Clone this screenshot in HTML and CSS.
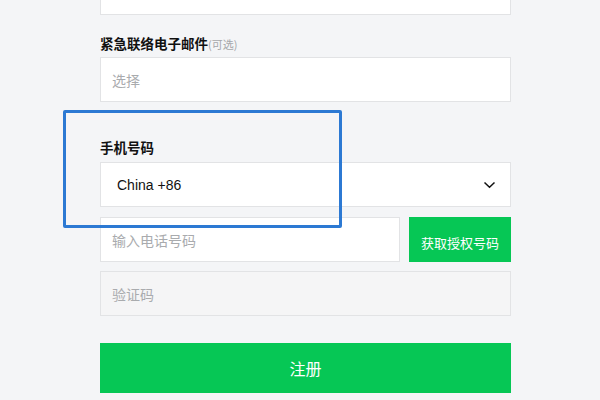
FILE: index.html
```html
<!DOCTYPE html>
<html>
<head>
    <meta charset="utf-8">
    <title>注册</title>
    <link rel="stylesheet" href="styles.css">
</head>
<body>
    <div id="page">
        <form id="signup">
            <div class="input stub"></div>

            <div class="label">紧急联络电子邮件<span class="optional">(可选)</span></div>
            <div class="input"><span class="placeholder">选择</span></div>

            <div class="label label-phone">手机号码</div>
            <div class="input select">
                <span class="value">China +86</span>
                <svg class="chevron" width="13" height="8" viewBox="0 0 13 8">
                    <path d="M1.5 1.5 L6.5 6.3 L11.5 1.5" fill="none" stroke="#111" stroke-width="1.5"/>
                </svg>
            </div>

            <div class="row">
                <div class="input phone"><span class="placeholder">输入电话号码</span></div>
                <button type="button" class="btn-code">获取授权号码</button>
            </div>

            <div class="input code"><span class="placeholder">验证码</span></div>

            <button type="button" class="btn-submit">注册</button>
        </form>

        <!-- marcação de destaque -->
        <div id="highlight"></div>
    </div>
</body>
</html>
```

FILE: styles.css
```css
body {
    margin: 0;
    padding: 0;
    background-color: #f4f5f7;
    font-family: "Noto Sans CJK SC", "Liberation Sans", sans-serif;
    overflow: hidden;
}

#page {
    position: relative;
    width: 600px;
    height: 400px;
}

#signup {
    display: flex;
    flex-direction: column;
    width: 411px;
    margin-left: 100px;
}

.input {
    box-sizing: border-box;
    height: 45px;
    background-color: #fff;
    border: 1px solid #e2e3e5;
    display: flex;
    align-items: center;
    padding: 0 11px;
    font-size: 14px;
}

.stub {
    margin-top: -30px;
}

.label {
    margin-top: 19px;
    margin-bottom: 5px;
    height: 18px;
    line-height: 18px;
    font-size: 13.5px;
    font-weight: bold;
    color: #111;
}

.label-phone {
    margin-top: 36px;
    margin-bottom: 6px;
}

.optional {
    font-size: 11px;
    font-weight: normal;
    color: #a5a7aa;
}

.placeholder {
    color: #a9abae;
}

.select {
    justify-content: space-between;
    padding: 0 14px 0 16px;
}

.select .value {
    font-family: "Liberation Sans", Arial, sans-serif;
    color: #111;
}

.row {
    display: flex;
    gap: 9px;
    margin-top: 10px;
}

.phone {
    flex: 1;
}

.btn-code {
    width: 102px;
    height: 45px;
    border: none;
    background-color: #06c755;
    color: #fff;
    font-family: inherit;
    font-size: 13px;
    padding: 5px 0 0;
}

.code {
    margin-top: 9px;
    background-color: #f5f5f6;
}

.btn-submit {
    margin-top: 27px;
    height: 50px;
    border: none;
    background-color: #06c755;
    color: #fff;
    font-family: inherit;
    font-size: 16px;
}

#highlight {
    position: absolute;
    left: 63px;
    top: 110px;
    width: 273px;
    height: 112px;
    border: 3px solid #2c79d3;
    border-radius: 2px;
}
```
